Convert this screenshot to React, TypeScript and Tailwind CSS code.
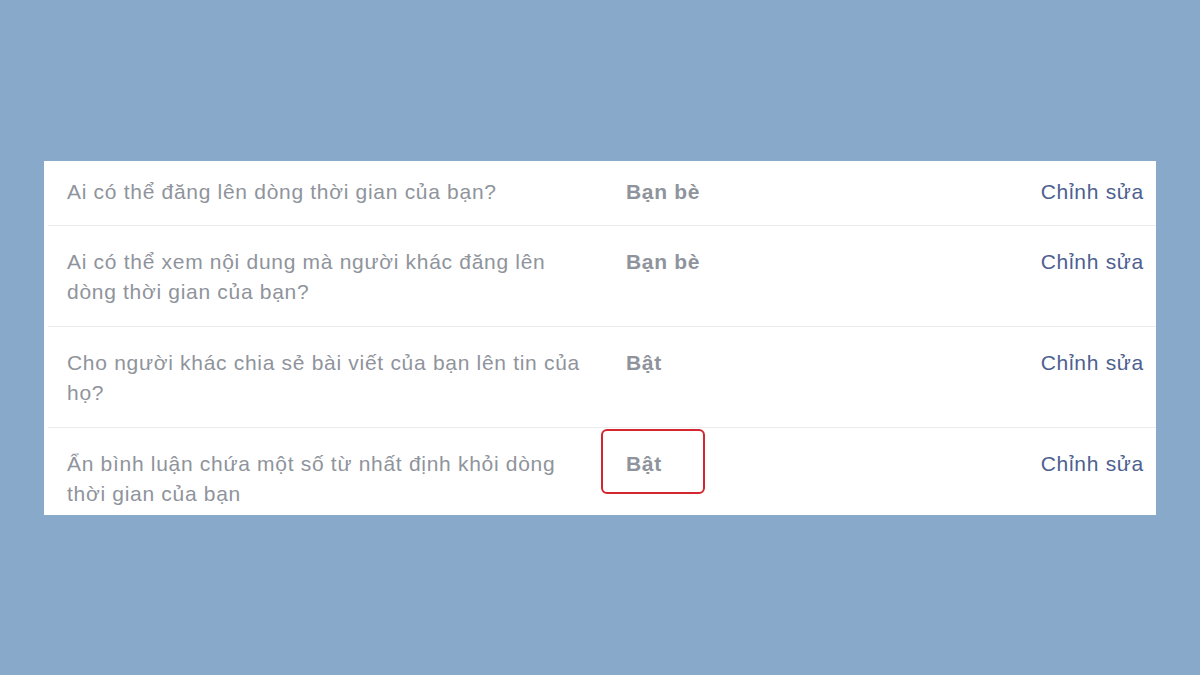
const rows = [
  { label: 'Ai có thể đăng lên dòng thời gian của bạn?', value: 'Bạn bè', first: true },
  { label: 'Ai có thể xem nội dung mà người khác đăng lên dòng thời gian của bạn?', value: 'Bạn bè' },
  { label: 'Cho người khác chia sẻ bài viết của bạn lên tin của họ?', value: 'Bật' },
  { label: 'Ẩn bình luận chứa một số từ nhất định khỏi dòng thời gian của bạn', value: 'Bật', marked: true, last: true },
]

export default function App() {
  return (
    <div className="h-[675px] w-[1200px] bg-[#89a9ca] pt-[161px] pl-[44px] font-['Liberation_Sans',Arial,sans-serif]">
      <div className="h-[354px] w-[1112px] overflow-hidden bg-white pl-[4px]">
        {rows.map((row, i) => (
          <div
            key={i}
            className={`flex pl-[19px] text-[21px] leading-[30px] tracking-[0.7px] ${row.first ? 'h-[65px] pt-[16px]' : 'h-[101px] pt-[21px]'} ${row.last ? '' : 'border-b border-[#e9ebee]'}`}
          >
            <div className="mr-[34px] w-[525px] text-[#8f949c]">{row.label}</div>
            <div className="relative w-[200px] font-bold text-[#8f949c]">
              {row.value}
              {row.marked && (
                <div className="absolute -left-[25px] -top-[20px] h-[65px] w-[104px] rounded-[6px] border-2 border-[#d3262e]" />
              )}
            </div>
            <div className="ml-auto pr-[12px] text-[#4d6090]">Chỉnh sửa</div>
          </div>
        ))}
      </div>
    </div>
  )
}
